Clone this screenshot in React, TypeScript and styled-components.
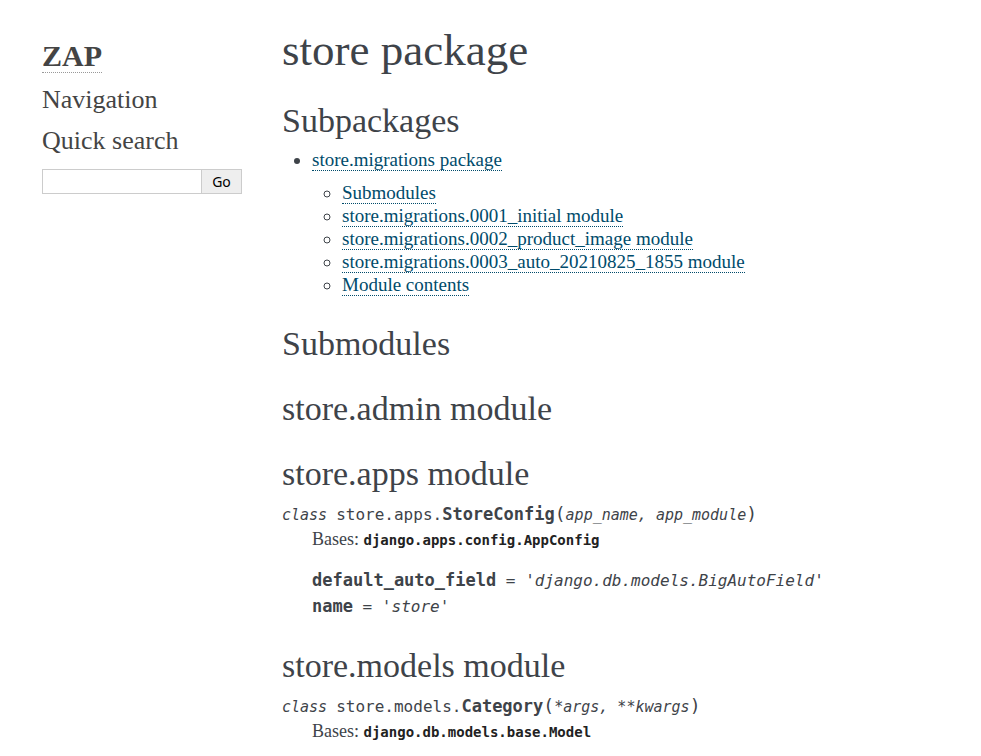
import React from "react";
import styled, { createGlobalStyle } from "styled-components";

const serif = `Georgia, "Liberation Serif", serif`;
const mono = `Consolas, "DejaVu Sans Mono", monospace`;

const GlobalStyle = createGlobalStyle`
  *, *::before, *::after { box-sizing: border-box; }
  html { overflow: hidden; }
  body {
    margin: 0;
    background: #fff;
    color: #3e4349;
    font: 19px/23px ${serif};
  }
`;

const Page = styled.div`
  display: flex;
  align-items: flex-start;
  gap: 40px;
  padding: 27px 32px 0 42px;
`;

const Sidebar = styled.aside`
  flex: 0 0 200px;
  min-width: 0;
  padding-top: 11px;
  color: #444;
`;

const Logo = styled.h1`
  margin: 0 0 11px;
  font-size: 30px;
  line-height: 36px;
`;

const HomeLink = styled.a`
  color: #444;
  text-decoration: none;
  border-bottom: 1px dotted #999;
`;

const SideHeading = styled.h3`
  margin: 0 0 11px;
  font-size: 26px;
  font-weight: 400;
  line-height: 30px;
`;

const SearchForm = styled.form`
  display: flex;
  margin-top: 13px;
`;

const SearchInput = styled.input`
  flex: 1;
  min-width: 0;
  height: 25px;
  border: 1px solid #ccc;
  border-right: 0;
  border-radius: 0;
  background: #fff;
  font: 16px ${serif};
`;

const SearchButton = styled.button`
  width: 41px;
  height: 25px;
  padding: 0;
  border: 1px solid #ccc;
  background: #eee;
  color: #000;
  font: 14px "Noto Sans", sans-serif;
`;

const Body = styled.main`
  flex: 1;
  min-width: 0;
`;

const Title = styled.h1`
  margin: 0;
  font-size: 45px;
  font-weight: 400;
  line-height: 46px;
`;

const Definition = styled.dl`
  margin: 11px 0 0;
`;

const Heading = styled.h2`
  margin: 31px 0 10px;
  font-size: 34px;
  font-weight: 400;
  line-height: 34px;

  ${Definition} + & {
    margin-top: 29px;
  }
`;

const List = styled.ul`
  margin: 10px 0;
  padding-left: 30px;
`;

const DocLink = styled.a`
  color: #004b6b;
  text-decoration: none;
  border-bottom: 1px dotted #004b6b;
`;

const Signature = styled.dt`
  font: 16px/26px ${mono};
`;

const Details = styled.dd`
  margin: 0 0 0 30px;
`;

const Bases = styled.p`
  margin: 0 0 17px;
  font-size: 18px;
`;

const Attribute = styled.dl`
  margin: 0;
`;

const Name = styled.b`
  font-size: 17px;
  line-height: 1;
`;

const Paren = styled.span`
  font-size: 18px;
  line-height: 1;
`;

const Term = styled.em`
  font-size: 15px;
  line-height: 1;
`;

const BaseClass = styled.code`
  color: #222;
  font: bold 14px/1 ${mono};
`;

const modules = [
  "Submodules",
  "store.migrations.0001_initial module",
  "store.migrations.0002_product_image module",
  "store.migrations.0003_auto_20210825_1855 module",
  "Module contents",
];

type ClassDocProps = {
  module: string;
  name: string;
  params: string;
  base: string;
  fields?: { name: string; value: string }[];
};

function ClassDoc({ module, name, params, base, fields = [] }: ClassDocProps) {
  return (
    <Definition>
      <Signature>
        <Term>class </Term>
        {module}.<Name>{name}</Name>
        <Paren>(</Paren>
        <Term>{params}</Term>
        <Paren>)</Paren>
      </Signature>
      <Details>
        <Bases>
          Bases: <BaseClass>{base}</BaseClass>
        </Bases>
        {fields.map((field) => (
          <Attribute key={field.name}>
            <Signature>
              <Name>{field.name}</Name>
              <em> = {field.value}</em>
            </Signature>
          </Attribute>
        ))}
      </Details>
    </Definition>
  );
}

export default function App() {
  return (
    <>
      <GlobalStyle />
      <Page>
        <Sidebar>
          <Logo>
            <HomeLink href="#">ZAP</HomeLink>
          </Logo>
          <SideHeading>Navigation</SideHeading>
          <SideHeading as="label" htmlFor="search">
            Quick search
          </SideHeading>
          <SearchForm onSubmit={(event) => event.preventDefault()}>
            <SearchInput id="search" type="text" name="q" />
            <SearchButton type="submit">Go</SearchButton>
          </SearchForm>
        </Sidebar>
        <Body>
          <Title>store package</Title>
          <Heading>Subpackages</Heading>
          <List>
            <li>
              <DocLink href="#migrations">store.migrations package</DocLink>
              <List>
                {modules.map((label) => (
                  <li key={label}>
                    <DocLink href="#migrations">{label}</DocLink>
                  </li>
                ))}
              </List>
            </li>
          </List>
          <Heading>Submodules</Heading>
          <Heading>store.admin module</Heading>
          <Heading>store.apps module</Heading>
          <ClassDoc
            module="store.apps"
            name="StoreConfig"
            params="app_name, app_module"
            base="django.apps.config.AppConfig"
            fields={[
              { name: "default_auto_field", value: "'django.db.models.BigAutoField'" },
              { name: "name", value: "'store'" },
            ]}
          />
          <Heading>store.models module</Heading>
          <ClassDoc
            module="store.models"
            name="Category"
            params="*args, **kwargs"
            base="django.db.models.base.Model"
          />
        </Body>
      </Page>
    </>
  );
}
